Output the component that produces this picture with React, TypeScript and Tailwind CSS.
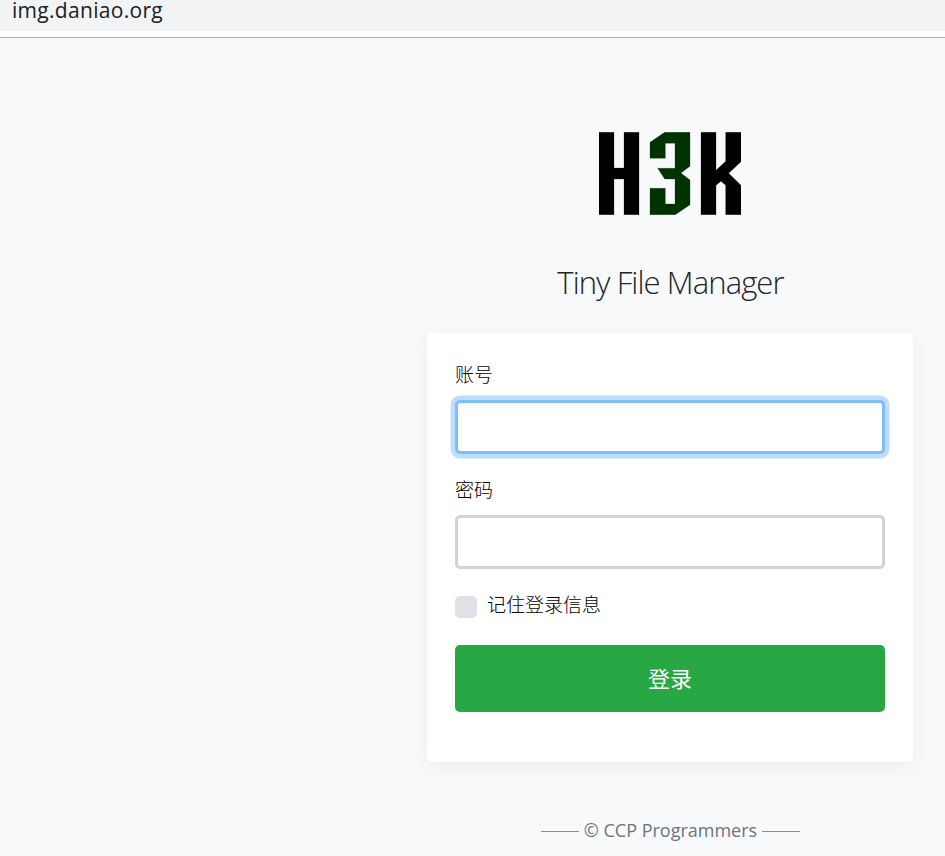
import React from 'react';

function Logo() {
  return (
    <svg className="mx-auto block h-[83px] w-[142px]" viewBox="27 36 426 249" role="img" aria-label="H3K">
      <g stroke="#a8a8aa" strokeWidth="2" paintOrder="stroke">
        <path d="M27 37H72V144H102V37H147V284H102V177H72V284H27Z" fill="#000" />
        <path d="M180 67L224 37H300V139L273 159L300 180V254L256 284H180V205H226V252H255V177H224L203 145H255V70H226V115H180Z" fill="#003300" />
        <path d="M333 37H378V151L407 124V37H453V125L416 160L453 196V284H407V196L393 184L378 196V284H333Z" fill="#000" />
      </g>
    </svg>
  );
}

function Field({ label, type, focused }: { label: string; type: string; focused?: boolean }) {
  return (
    <label className="block h-[115px]">
      <span className="block h-[39px] text-[19px] leading-[28px] font-light text-black">{label}</span>
      <input
        type={type}
        className={
          focused
            ? 'block h-[54px] w-full rounded-[5px] border-[3px] border-[#80bdff] bg-white shadow-[0_0_0_4.5px_#bfdeff] outline-none'
            : 'block h-[54px] w-full rounded-[5px] border-[3px] border-[#ced4da] bg-white outline-none'
        }
      />
    </label>
  );
}

export default function App() {
  return (
    <div className="h-[856px] overflow-hidden bg-[#f8f9fb] font-['Open_Sans','Noto_Sans_CJK_SC',sans-serif] text-[#212529]">
      <header className="h-[38px] border-b border-[#b0b1b4] bg-white">
        <div className="h-[31px] bg-[#f1f3f4] pl-[12px] text-[21px] leading-[20px] tracking-[0.3px] text-[#202124]">
          img.daniao.org
        </div>
      </header>
      <main className="ml-[427px] w-[486px] pt-[94px]">
        <Logo />
        <h1 className="mt-[43px] h-[75px] pl-px text-center text-[31px] leading-[48px] font-light tracking-[-0.9px]">Tiny File Manager</h1>
        <form className="h-[429px] rounded-[5px] bg-white px-[28px] pt-[28px] shadow-[0_5px_20px_rgba(0,0,0,0.05)]">
          <Field label="账号" type="text" focused />
          <Field label="密码" type="password" />
          <label className="flex h-[54px] items-start text-[19px] leading-[28px] font-light text-black">
            <span className="mt-[5px] mr-[10px] size-[22px] rounded-[5px] bg-[#dee2e6]" />
            记住登录信息
          </label>
          <button type="button" className="block h-[67px] w-full rounded-[5px] bg-[#28a745] text-[22px] text-white">
            登录
          </button>
        </form>
        <footer className="mt-[55px] flex h-[28px] items-center justify-center gap-[5px] pl-px text-[18px] text-[#6c757d]">
          <span className="h-px w-[38px] bg-[#888d92]" />
          <span className="-mt-[2px]">© CCP Programmers</span>
          <span className="h-px w-[38px] bg-[#888d92]" />
        </footer>
      </main>
    </div>
  );
}
